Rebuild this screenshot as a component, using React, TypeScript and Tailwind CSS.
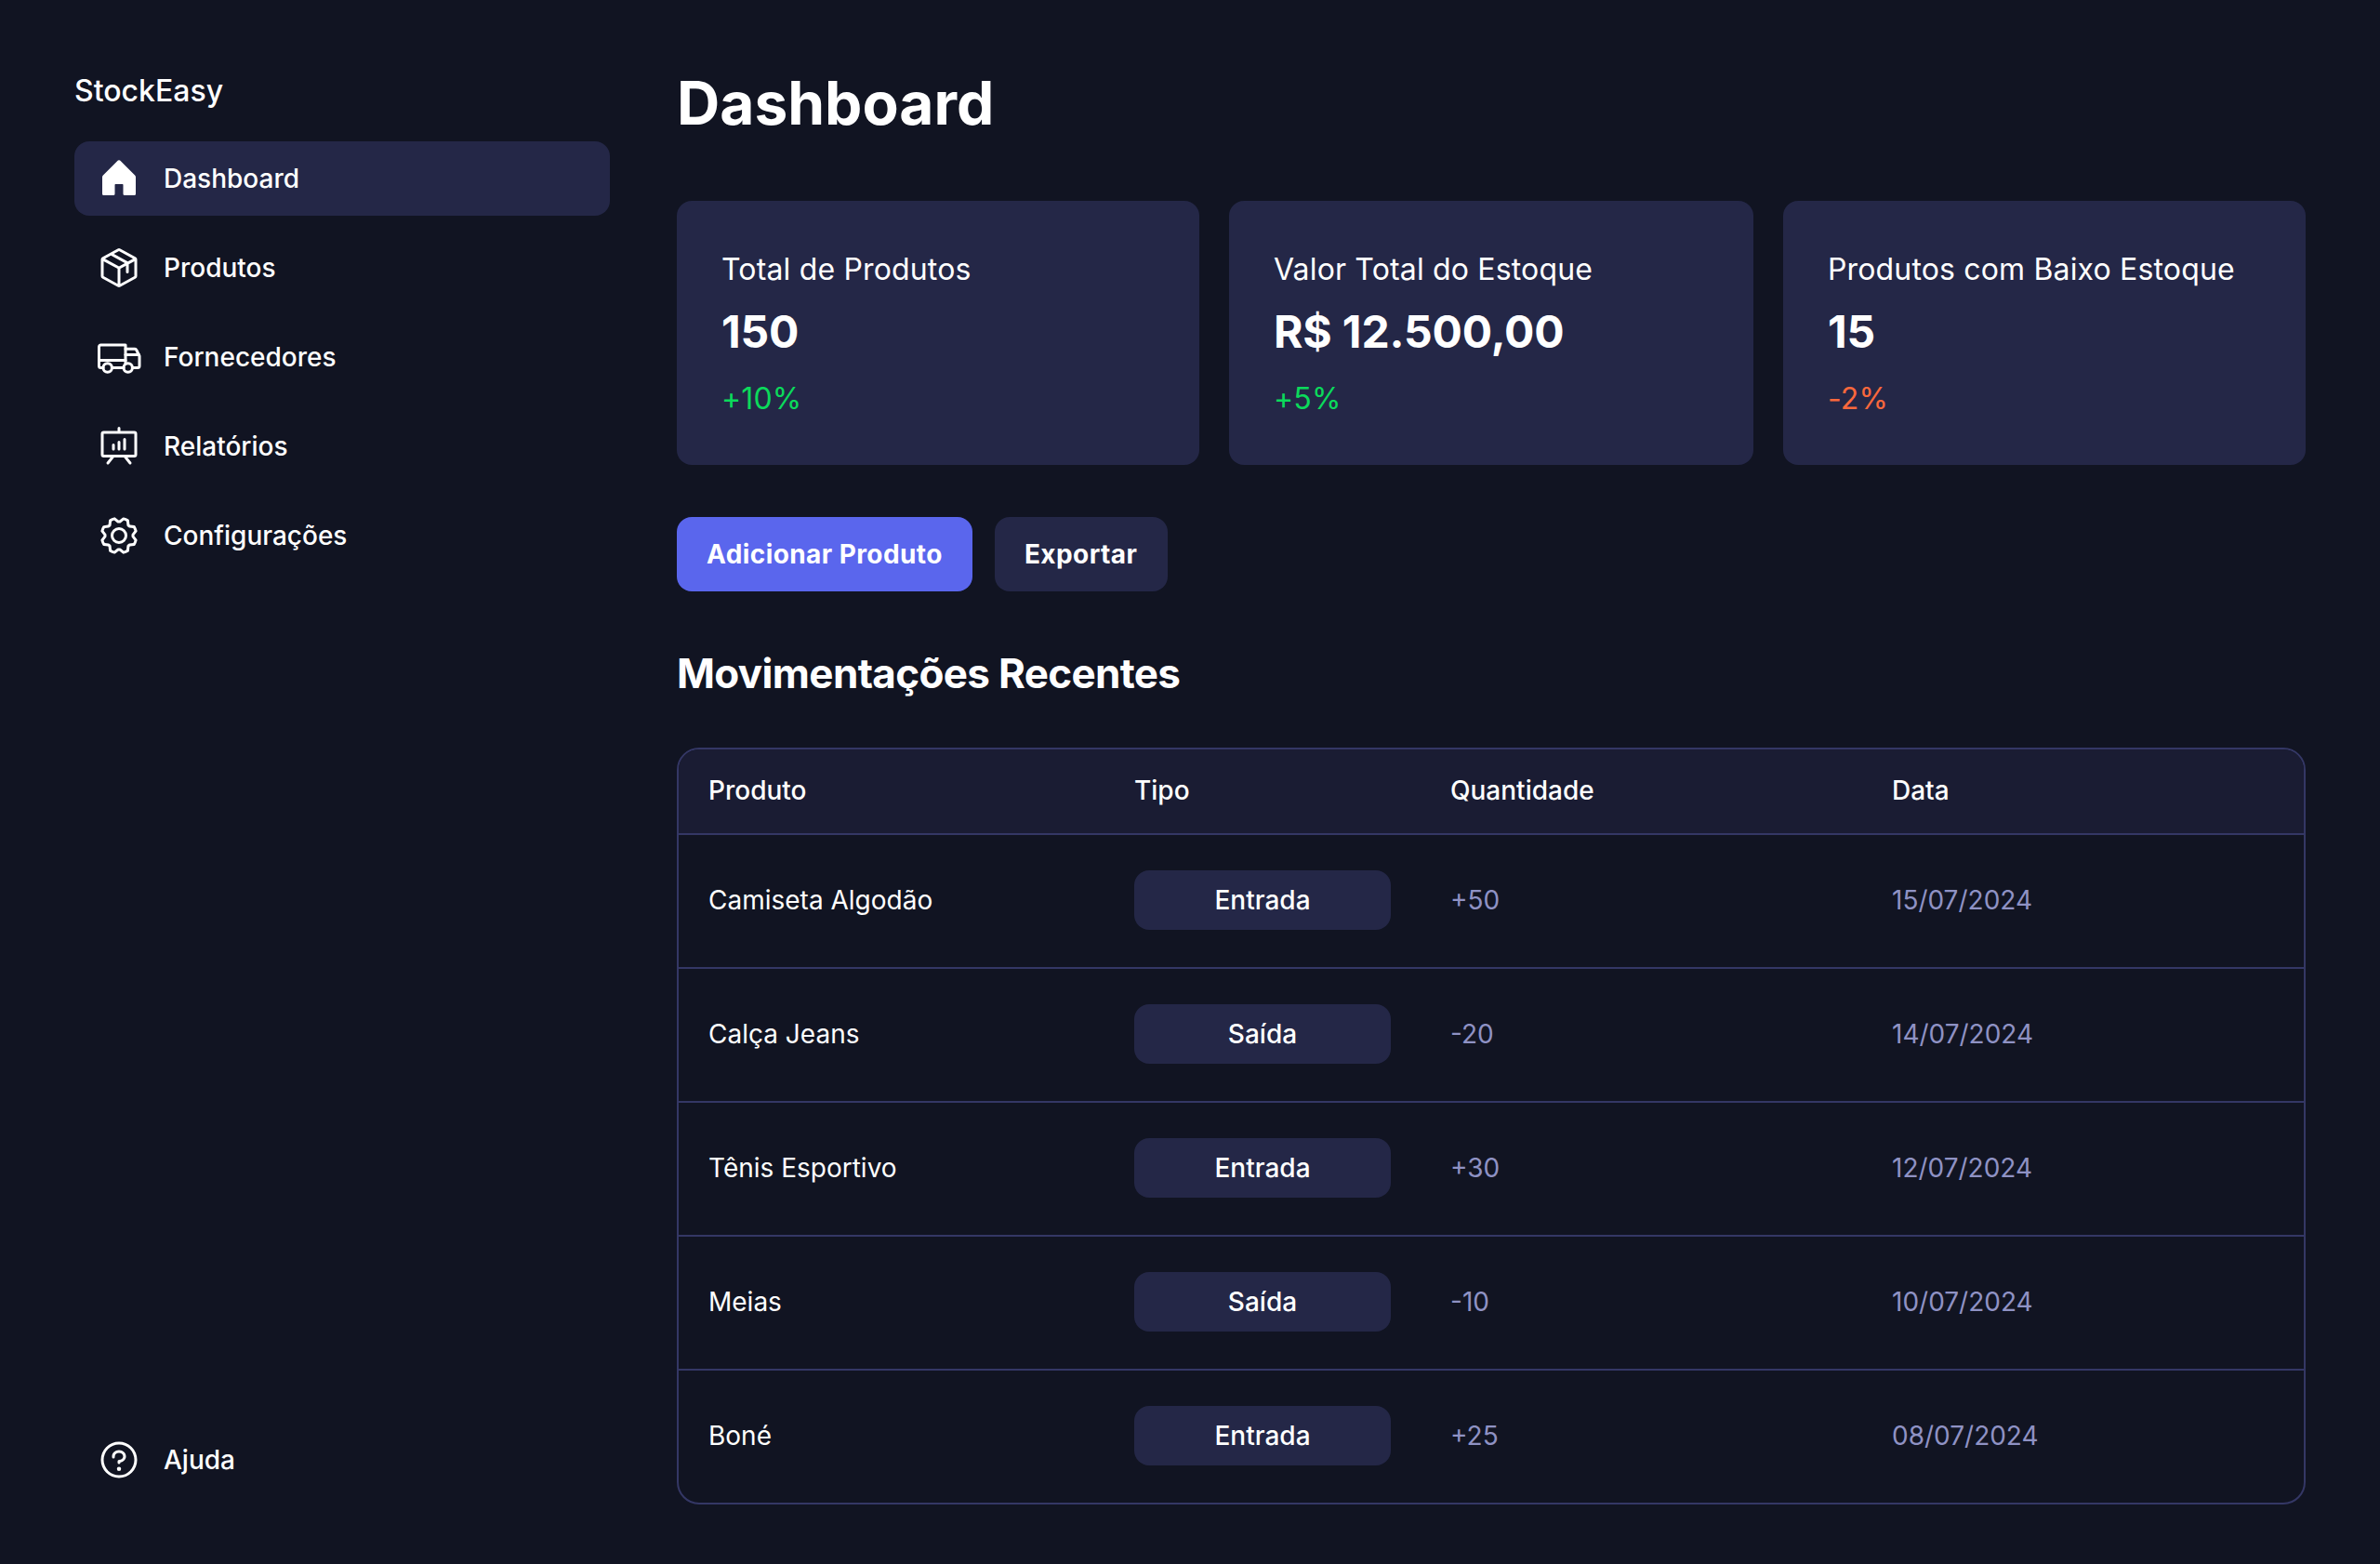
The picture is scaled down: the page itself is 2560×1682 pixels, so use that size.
import type { ReactNode } from "react";
import { PiGear, PiHouseFill, PiPackage, PiPresentationChart, PiQuestion } from "react-icons/pi";

function TruckIcon() {
  return (
    <svg
      width={48}
      height={48}
      viewBox="0 0 48 48"
      fill="none"
      stroke="currentColor"
      strokeWidth={3}
      strokeLinecap="round"
      strokeLinejoin="round"
    >
      <path d="M7 35.5H4.5a2 2 0 0 1-2-2V13a2 2 0 0 1 2-2H31v20" />
      <path d="M16.5 35.5H29" />
      <path d="M38.5 35.5h5.5a2 2 0 0 0 2-2V23l-3.2-6.5a2 2 0 0 0-1.8-1.2H31" />
      <path d="M2.5 27.5H31" />
      <path d="M31 21.5h14.5" />
      <circle cx={11.7} cy={35.5} r={4.7} />
      <circle cx={33.7} cy={35.5} r={4.7} />
    </svg>
  );
}

const navItems: { label: string; icon: ReactNode; active?: boolean }[] = [
  { label: "Dashboard", icon: <PiHouseFill size={48} />, active: true },
  { label: "Produtos", icon: <PiPackage size={48} /> },
  { label: "Fornecedores", icon: <TruckIcon /> },
  { label: "Relatórios", icon: <PiPresentationChart size={48} /> },
  { label: "Configurações", icon: <PiGear size={48} /> },
];

const stats = [
  { label: "Total de Produtos", value: "150", change: "+10%", up: true },
  { label: "Valor Total do Estoque", value: "R$ 12.500,00", change: "+5%", up: true },
  { label: "Produtos com Baixo Estoque", value: "15", change: "-2%", up: false },
];

const movements = [
  { product: "Camiseta Algodão", type: "Entrada", qty: "+50", date: "15/07/2024" },
  { product: "Calça Jeans", type: "Saída", qty: "-20", date: "14/07/2024" },
  { product: "Tênis Esportivo", type: "Entrada", qty: "+30", date: "12/07/2024" },
  { product: "Meias", type: "Saída", qty: "-10", date: "10/07/2024" },
  { product: "Boné", type: "Entrada", qty: "+25", date: "08/07/2024" },
];

function NavRow({ label, icon, active }: { label: string; icon: ReactNode; active?: boolean }) {
  return (
    <div
      className={`flex h-20 items-center gap-6 rounded-2xl px-6 text-[28px] font-medium leading-[42px] text-white ${
        active ? "bg-[#242747]" : ""
      }`}
    >
      {icon}
      <span>{label}</span>
    </div>
  );
}

export default function App() {
  return (
    <div
      className="flex min-h-[1682px] bg-[#111422] px-20 text-white"
      style={{ fontFamily: "Inter, 'Noto Sans', sans-serif" }}
    >
      <aside className="flex w-[576px] shrink-0 flex-col justify-between pb-[72px] pt-[74px]">
        <div>
          <h2 className="mb-[30px] text-[32px] font-medium leading-[48px]">StockEasy</h2>
          <nav className="flex flex-col gap-4">
            {navItems.map((item) => (
              <NavRow key={item.label} {...item} />
            ))}
          </nav>
        </div>
        <NavRow label="Ajuda" icon={<PiQuestion size={48} />} />
      </aside>

      <main className="ml-[72px] flex-1 pt-[65px]">
        <h1 className="text-[64px] font-bold leading-[92px]">Dashboard</h1>

        <section className="mt-[59px] grid grid-cols-[562px_564px_1fr] gap-8">
          {stats.map((stat) => (
            <div key={stat.label} className="flex h-[284px] flex-col rounded-2xl bg-[#242747] p-12">
              <p className="mt-[2px] text-[32px] font-normal leading-[48px] tracking-[0.16px]">{stat.label}</p>
              <p className="mt-[14px] text-[48px] font-bold leading-[58px] tracking-[-0.15px]">{stat.value}</p>
              <p
                className={`mt-[19px] text-[32px] font-normal leading-[48px] tracking-[0.16px] ${
                  stat.up ? "text-[#0bda5b]" : "text-[#fa683c]"
                }`}
              >
                {stat.change}
              </p>
            </div>
          ))}
        </section>

        <div className="mt-[56px] flex gap-6">
          <button type="button" className="h-20 rounded-2xl bg-[#5a66ed] px-8 text-[28px] font-bold tracking-[0.015em]">
            Adicionar Produto
          </button>
          <button
            type="button"
            className="h-20 rounded-2xl bg-[#242747] pl-8 pr-[33px] text-[28px] font-bold tracking-[0.015em]"
          >
            Exportar
          </button>
        </div>

        <h2 className="mt-[48px] text-[44px] font-bold leading-[80px] tracking-[-0.015em]">Movimentações Recentes</h2>

        <div className="mt-[40px] overflow-hidden rounded-[24px] border-2 border-[#343765]">
          <table className="w-full table-fixed">
            <colgroup>
              <col className="w-[458px]" />
              <col className="w-[340px]" />
              <col className="w-[475px]" />
              <col />
            </colgroup>
            <thead>
              <tr className="h-[91px] bg-[#1a1c33] text-left text-[28px] font-medium">
                <th className="px-8 pb-[2px] font-medium">Produto</th>
                <th className="px-8 pb-[2px] font-medium">Tipo</th>
                <th className="px-8 pb-[2px] font-medium">Quantidade</th>
                <th className="px-8 pb-[2px] font-medium">Data</th>
              </tr>
            </thead>
            <tbody>
              {movements.map((row) => (
                <tr key={row.product} className="h-[144px] border-t-2 border-[#343765] text-[28px] last:h-[143px]">
                  <td className="px-8 pb-[2px]">{row.product}</td>
                  <td className="px-8 pb-[2px]">
                    <span className="flex h-16 w-[276px] items-center justify-center rounded-2xl bg-[#242747] font-medium">
                      {row.type}
                    </span>
                  </td>
                  <td className="px-8 pb-[2px] text-[#8f92c4]">{row.qty}</td>
                  <td className="px-8 pb-[2px] text-[#8f92c4]">{row.date}</td>
                </tr>
              ))}
            </tbody>
          </table>
        </div>
      </main>
    </div>
  );
}
